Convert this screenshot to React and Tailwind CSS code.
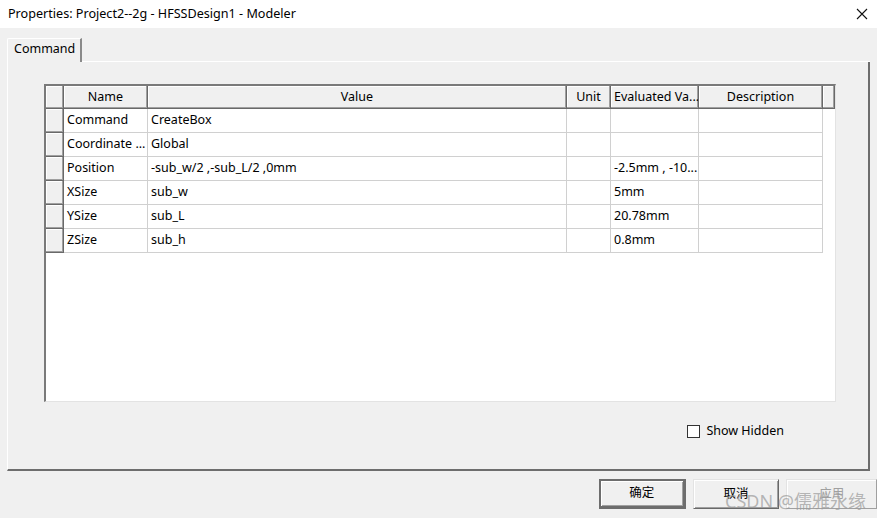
import React from 'react';

const rows = [
  ['Command', 'CreateBox', '', ''],
  ['Coordinate ...', 'Global', '', ''],
  ['Position', '-sub_w/2 ,-sub_L/2 ,0mm', '', '-2.5mm , -10...'],
  ['XSize', 'sub_w', '', '5mm'],
  ['YSize', 'sub_L', '', '20.78mm'],
  ['ZSize', 'sub_h', '', '0.8mm'],
];

const raised =
  'bg-[#f0f0f0] border-r border-b border-[#696969] shadow-[inset_-1px_-1px_0_#a0a0a0,inset_1px_1px_0_#ffffff]';

const HeadCell = ({ children, align = 'center' }) => (
  <div
    className={`${raised} h-[23px] flex items-center overflow-hidden whitespace-nowrap ${
      align === 'center' ? 'justify-center' : 'pl-[3px]'
    }`}
  >
    {children}
  </div>
);

const Cell = ({ children }) => (
  <div className="h-[24px] flex items-center pl-[3px] bg-white border-r border-b border-[#d0d0d0] overflow-hidden whitespace-nowrap">
    {children}
  </div>
);

export default function App() {
  return (
    <div className="relative w-[877px] h-[518px] overflow-hidden bg-[#f0f0f0] text-[12.5px] text-black font-['Noto_Sans','Noto_Sans_CJK_SC',sans-serif] flex flex-col">
      {/* Title bar */}
      <div className="h-[28px] bg-white flex items-center justify-between pl-[8px] pr-[5px]">
        <span className="text-[12.6px]">Properties: Project2--2g - HFSSDesign1 - Modeler</span>
        <svg width="12" height="12" viewBox="0 0 12 12" className="mr-[4px]">
          <path d="M1 1 L11 11 M11 1 L1 11" stroke="#111" strokeWidth="1.1" fill="none" />
        </svg>
      </div>

      {/* Tab strip */}
      <div className="px-[7px] pt-[10px] flex flex-col">
        <div className="flex h-[24px]">
          <div className="w-[75px] h-[24px] border-l border-t border-white border-r-2 border-r-[#8a8a8a] rounded-tl-[2px] flex items-start pt-[1px] pl-[6px]">
            Command
          </div>
          <div className="flex-1 border-b border-white" />
        </div>

        {/* Panel */}
        <div className="h-[409px] border-l border-white border-r-2 border-b-2 border-r-[#6d6d6d] border-b-[#6d6d6d] pl-[36px] pt-[22px] pr-[34px] flex flex-col">
          {/* Grid */}
          <div className="w-[792px] h-[318px] bg-white border-l-2 border-t-2 border-[#7a7a7a] border-r border-b border-r-[#e3e3e3] border-b-[#e3e3e3]">
            <div className="grid grid-cols-[18px_84px_419px_44px_88px_124px_12px]">
              <HeadCell />
              <HeadCell>Name</HeadCell>
              <HeadCell>Value</HeadCell>
              <HeadCell>Unit</HeadCell>
              <HeadCell align="left">Evaluated Va...</HeadCell>
              <HeadCell>Description</HeadCell>
              <HeadCell />
            </div>
            {rows.map((r) => (
              <div key={r[0]} className="grid grid-cols-[18px_84px_419px_44px_88px_124px]">
                <div className={`${raised} h-[24px]`} />
                <Cell>{r[0]}</Cell>
                <Cell>{r[1]}</Cell>
                <Cell>{r[2]}</Cell>
                <Cell>{r[3]}</Cell>
                <Cell />
              </div>
            ))}
          </div>

          {/* Show hidden */}
          <div className="flex justify-end pr-[50px] mt-[20px]">
            <label className="flex items-center gap-[6px]">
              <span className="w-[13px] h-[13px] bg-white border border-[#333]" />
              <span>Show Hidden</span>
            </label>
          </div>
        </div>
      </div>

      {/* Buttons */}
      <div className="flex gap-[7px] pl-[599px] mt-[8px]">
        <button className="w-[88px] h-[30px] bg-[#f0f0f0] border-2 border-[#6d6d6d] border-r-[3px] border-b-[3px] shadow-[inset_1px_1px_0_#ffffff,inset_-1px_-1px_0_#a0a0a0] flex items-center justify-center">
          确定
        </button>
        <button className="w-[88px] h-[30px] bg-[#f0f0f0] border border-[#e3e3e3] border-r-[#696969] border-b-[#696969] shadow-[inset_1px_1px_0_#ffffff,inset_-1px_-1px_0_#a0a0a0] flex items-center justify-center">
          取消
        </button>
        <button className="w-[92px] h-[30px] bg-[#f0f0f0] border border-[#e3e3e3] border-r-[#a0a0a0] border-b-[#a0a0a0] shadow-[inset_1px_1px_0_#ffffff] flex items-center justify-center text-[#a0a0a0]">
          应用
        </button>
      </div>

      {/* Watermark */}
      <div className="absolute left-[725px] top-[488px] text-[18px] text-[#9a9a9a]/70 whitespace-nowrap pointer-events-none">
        CSDN @儒雅永缘
      </div>
    </div>
  );
}
